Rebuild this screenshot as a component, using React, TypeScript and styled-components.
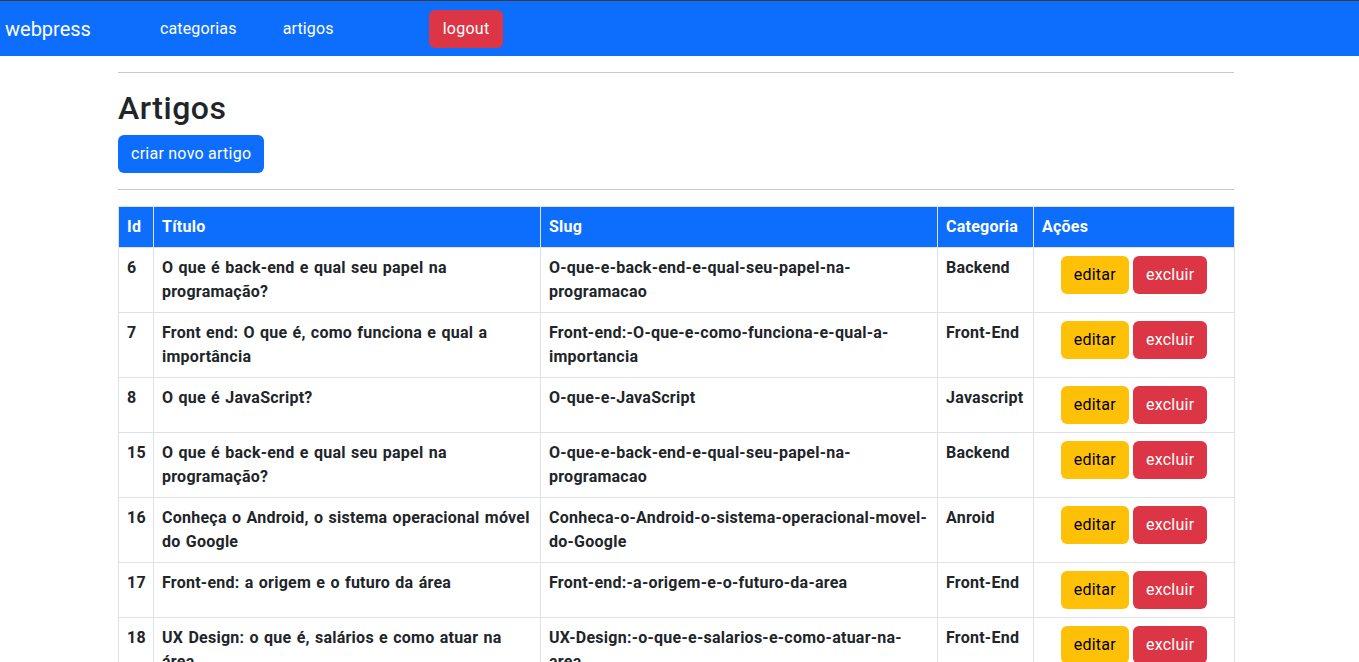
import React from 'react';
import styled, { createGlobalStyle } from 'styled-components';

const GlobalStyle = createGlobalStyle`
  * {
    box-sizing: border-box;
  }

  body {
    margin: 0;
    font-family: 'Roboto', 'Open Sans', sans-serif;
    font-size: 16px;
    line-height: 1.5;
    letter-spacing: 0.25px;
    color: #212529;
    background: #fff;
  }
`;

const Navbar = styled.nav`
  display: flex;
  align-items: center;
  height: 56px;
  padding: 0 5px;
  background: #0d6efd;
  border-top: 1px solid #3a3a3a;
`;

const Brand = styled.a`
  font-size: 20px;
  letter-spacing: 0;
  color: #fff;
  text-decoration: none;
`;

const NavLinks = styled.div`
  display: flex;
  gap: 46px;
  margin-left: 69px;
`;

const NavLink = styled.a`
  color: #fff;
  text-decoration: none;
  letter-spacing: 0.15px;
`;

const Button = styled.button<{ $variant: 'primary' | 'danger' | 'warning' }>`
  display: inline-block;
  padding: 6px 12px;
  font-family: inherit;
  font-size: 16px;
  line-height: 1.5;
  letter-spacing: inherit;
  border: 1px solid transparent;
  border-radius: 6px;
  cursor: pointer;
  color: ${({ $variant }) => ($variant === 'warning' ? '#000' : '#fff')};
  background: ${({ $variant }) =>
    $variant === 'primary' ? '#0d6efd' : $variant === 'danger' ? '#dc3545' : '#ffc107'};
`;

const LogoutButton = styled(Button)`
  margin-left: 95px;
  padding: 6px 13px;
`;

const Container = styled.main`
  width: 1116px;
  margin-left: 118px;
  padding-bottom: 40px;
`;

const Divider = styled.hr`
  margin: 16px 0;
  border: 0;
  border-top: 1px solid #c8c8c8;
`;

const Title = styled.h2`
  margin: 0 0 8px;
  font-size: 32px;
  font-weight: 500;
  line-height: 1.2;
  letter-spacing: 0.5px;
`;

const Table = styled.table`
  width: 100%;
  table-layout: fixed;
  border-collapse: collapse;
  border: 1px solid #dee2e6;
`;

const HeadCell = styled.th<{ $width: number }>`
  width: ${({ $width }) => $width}px;
  padding: 8px;
  text-align: left;
  font-weight: 700;
  color: #fff;
  background: #0d6efd;
  border: 1px solid #dee2e6;
`;

const Cell = styled.td`
  padding: 8px;
  vertical-align: top;
  font-weight: 700;
  word-spacing: 1px;
  border: 1px solid #dee2e6;
`;

const ActionCell = styled(Cell)`
  text-align: center;
  white-space: nowrap;
  word-spacing: 0;

  button + button {
    margin-left: 4px;
  }
`;

type Article = { id: number; title: string; slug: string; category: string };

const articles: Article[] = [
  { id: 6, title: 'O que é back-end e qual seu papel na programação?', slug: 'O-que-e-back-end-e-qual-seu-papel-na-programacao', category: 'Backend' },
  { id: 7, title: 'Front end: O que é, como funciona e qual a importância', slug: 'Front-end:-O-que-e-como-funciona-e-qual-a-importancia', category: 'Front-End' },
  { id: 8, title: 'O que é JavaScript?', slug: 'O-que-e-JavaScript', category: 'Javascript' },
  { id: 15, title: 'O que é back-end e qual seu papel na programação?', slug: 'O-que-e-back-end-e-qual-seu-papel-na-programacao', category: 'Backend' },
  { id: 16, title: 'Conheça o Android, o sistema operacional móvel do Google', slug: 'Conheca-o-Android-o-sistema-operacional-movel-do-Google', category: 'Anroid' },
  { id: 17, title: 'Front-end: a origem e o futuro da área', slug: 'Front-end:-a-origem-e-o-futuro-da-area', category: 'Front-End' },
  { id: 18, title: 'UX Design: o que é, salários e como atuar na área', slug: 'UX-Design:-o-que-e-salarios-e-como-atuar-na-area', category: 'Front-End' },
  { id: 19, title: 'O que é React e por que usar?', slug: 'O-que-e-React-e-por-que-usar', category: 'Front-End' },
  { id: 20, title: 'Node.js: o que é e como funciona', slug: 'Node.js:-o-que-e-e-como-funciona', category: 'Backend' },
  { id: 21, title: 'Kotlin: a linguagem oficial do Android', slug: 'Kotlin:-a-linguagem-oficial-do-Android', category: 'Anroid' },
  { id: 22, title: 'O que é TypeScript?', slug: 'O-que-e-TypeScript', category: 'Javascript' },
  { id: 23, title: 'API REST: o que é e como criar uma', slug: 'API-REST:-o-que-e-e-como-criar-uma', category: 'Backend' },
  { id: 24, title: 'CSS Grid e Flexbox: quando usar cada um', slug: 'CSS-Grid-e-Flexbox:-quando-usar-cada-um', category: 'Front-End' },
  { id: 25, title: 'Promises e async/await no JavaScript', slug: 'Promises-e-async-await-no-JavaScript', category: 'Javascript' },
  { id: 26, title: 'Jetpack Compose: interfaces modernas no Android', slug: 'Jetpack-Compose:-interfaces-modernas-no-Android', category: 'Anroid' },
  { id: 27, title: 'Banco de dados relacional e não relacional', slug: 'Banco-de-dados-relacional-e-nao-relacional', category: 'Backend' },
  { id: 28, title: 'Acessibilidade na web: por onde começar', slug: 'Acessibilidade-na-web:-por-onde-comecar', category: 'Front-End' },
];

const columns = [
  { label: 'Id', width: 35 },
  { label: 'Título', width: 387 },
  { label: 'Slug', width: 397 },
  { label: 'Categoria', width: 96 },
  { label: 'Ações', width: 201 },
];

const App = () => {
  return (
    <>
      <GlobalStyle />
      <Navbar>
        <Brand href="#">webpress</Brand>
        <NavLinks>
          <NavLink href="#">categorias</NavLink>
          <NavLink href="#">artigos</NavLink>
        </NavLinks>
        <LogoutButton $variant="danger">logout</LogoutButton>
      </Navbar>
      <Container>
        <Divider />
        <Title>Artigos</Title>
        <Button $variant="primary">criar novo artigo</Button>
        <Divider />
        <Table>
          <thead>
            <tr>
              {columns.map((col) => (
                <HeadCell key={col.label} $width={col.width}>
                  {col.label}
                </HeadCell>
              ))}
            </tr>
          </thead>
          <tbody>
            {articles.map((article) => (
              <tr key={article.id}>
                <Cell>{article.id}</Cell>
                <Cell>{article.title}</Cell>
                <Cell>{article.slug}</Cell>
                <Cell>{article.category}</Cell>
                <ActionCell>
                  <Button $variant="warning">editar</Button>
                  <Button $variant="danger">excluir</Button>
                </ActionCell>
              </tr>
            ))}
          </tbody>
        </Table>
      </Container>
    </>
  );
};

export default App;
